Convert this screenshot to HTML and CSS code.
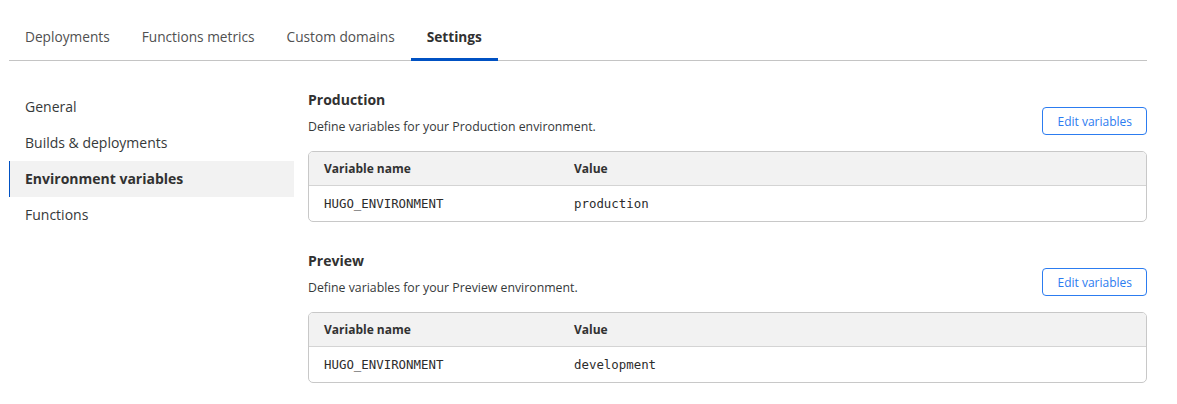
FILE: index.html
```html
<!DOCTYPE html>
<html lang="en">
<head>
<meta charset="utf-8">
<title>Settings</title>
<link rel="stylesheet" href="styles.css">
</head>
<body>
<div class="page">
  <nav class="tabs">
    <a class="tab">Deployments</a>
    <a class="tab">Functions metrics</a>
    <a class="tab">Custom domains</a>
    <a class="tab active">Settings</a>
  </nav>
  <div class="body">
    <aside class="sidebar">
      <a class="side-item">General</a>
      <a class="side-item">Builds &amp; deployments</a>
      <a class="side-item active">Environment variables</a>
      <a class="side-item">Functions</a>
    </aside>
    <main class="main">
      <section class="env">
        <div class="env-head">
          <div class="env-text">
            <h2 class="env-title">Production</h2>
            <p class="env-desc">Define variables for your Production environment.</p>
          </div>
          <button class="btn">Edit variables</button>
        </div>
        <div class="table">
          <div class="row head">
            <div class="cell">Variable name</div>
            <div class="cell">Value</div>
          </div>
          <div class="row">
            <div class="cell mono">HUGO_ENVIRONMENT</div>
            <div class="cell mono">production</div>
          </div>
        </div>
      </section>
      <section class="env">
        <div class="env-head">
          <div class="env-text">
            <h2 class="env-title">Preview</h2>
            <p class="env-desc">Define variables for your Preview environment.</p>
          </div>
          <button class="btn">Edit variables</button>
        </div>
        <div class="table">
          <div class="row head">
            <div class="cell">Variable name</div>
            <div class="cell">Value</div>
          </div>
          <div class="row">
            <div class="cell mono">HUGO_ENVIRONMENT</div>
            <div class="cell mono">development</div>
          </div>
        </div>
      </section>
    </main>
  </div>
</div>
</body>
</html>
```

FILE: styles.css
```css
* { box-sizing: border-box; }
html, body { margin: 0; padding: 0; background: #fff; }
body {
  font-family: "Open Sans", "Noto Sans", sans-serif;
  color: #36393a;
  font-size: 14px;
}
.page {
  width: 1138px;
  margin-left: 9px;
}
.tabs {
  display: flex;
  border-bottom: 1px solid #c4c4c4;
}
.tab {
  display: block;
  padding: 27px 16px 11px;
  line-height: 20px;
  font-size: 13.7px;
  color: #505050;
  border-bottom: 3px solid transparent;
  margin-bottom: -1px;
  cursor: pointer;
}
.tab.active {
  color: #313131;
  font-weight: 700;
  border-bottom-color: #0051c3;
}
.body {
  display: flex;
  gap: 14px;
}
.sidebar {
  width: 285px;
  flex: none;
  padding-top: 28px;
  display: flex;
  flex-direction: column;
}
.side-item {
  display: block;
  height: 36px;
  line-height: 36px;
  padding-left: 16px;
  font-size: 14px;
  color: #36393a;
}
.side-item.active {
  background: #f2f2f2;
  font-weight: 700;
  color: #313131;
  border-left: 1px solid #0051c3;
  padding-left: 15px;
}
.main {
  flex: 1;
  padding-top: 29px;
}
.env { margin-bottom: 29px; }
.env-head {
  display: flex;
  justify-content: space-between;
  align-items: flex-end;
}
.env-title {
  margin: 0;
  font-size: 14px;
  line-height: 20px;
  font-weight: 700;
  color: #313131;
}
.env-desc {
  margin: 7px 0 0;
  font-size: 12.3px;
  line-height: 20px;
  color: #36393a;
}
.btn {
  height: 28px;
  padding: 0 14px;
  margin-bottom: 2px;
  border: 1px solid #2c7cf0;
  border-radius: 4px;
  background: #fff;
  color: #2c7cf0;
  font-family: inherit;
  font-size: 12px;
  cursor: pointer;
}
.table {
  margin-top: 14px;
  border: 1px solid #c8c8c8;
  border-radius: 5px;
  overflow: hidden;
}
.row {
  display: grid;
  grid-template-columns: 250px 1fr;
  height: 35px;
  align-items: center;
}
.row.head {
  background: #f2f2f2;
  height: 34px;
  border-bottom: 1px solid #d4d4d4;
  font-weight: 700;
  font-size: 12px;
  color: #313131;
}
.cell { padding-left: 15px; }
.mono {
  font-family: "DejaVu Sans Mono", monospace;
  font-size: 12.4px;
  color: #2c2c2c;
}
```
